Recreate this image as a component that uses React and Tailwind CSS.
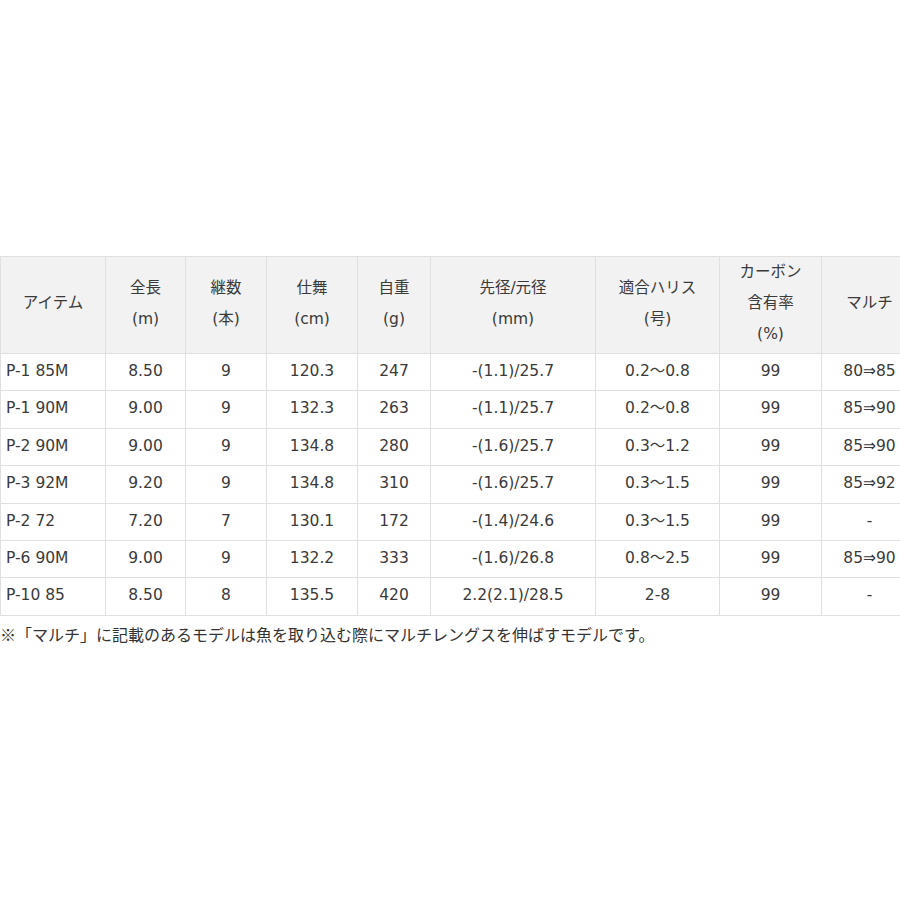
import React from "react";

const widths = [105, 80, 81, 91, 73, 165, 124, 102, 96];

const header = [
  ["アイテム"],
  ["全長", "(m)"],
  ["継数", "(本)"],
  ["仕舞", "(cm)"],
  ["自重", "(g)"],
  ["先径/元径", "(mm)"],
  ["適合ハリス", "(号)"],
  ["カーボン", "含有率", "(%)"],
  ["マルチ"],
];

const rows = [
  ["P-1 85M", "8.50", "9", "120.3", "247", "-(1.1)/25.7", "0.2～0.8", "99", "80⇒85"],
  ["P-1 90M", "9.00", "9", "132.3", "263", "-(1.1)/25.7", "0.2～0.8", "99", "85⇒90"],
  ["P-2 90M", "9.00", "9", "134.8", "280", "-(1.6)/25.7", "0.3～1.2", "99", "85⇒90"],
  ["P-3 92M", "9.20", "9", "134.8", "310", "-(1.6)/25.7", "0.3～1.5", "99", "85⇒92"],
  ["P-2 72", "7.20", "7", "130.1", "172", "-(1.4)/24.6", "0.3～1.5", "99", "-"],
  ["P-6 90M", "9.00", "9", "132.2", "333", "-(1.6)/26.8", "0.8～2.5", "99", "85⇒90"],
  ["P-10 85", "8.50", "8", "135.5", "420", "2.2(2.1)/28.5", "2-8", "99", "-"],
];

const App = () => {
  return (
    <div className="w-[900px] h-[900px] overflow-hidden bg-white text-[#3a3a3a]">
      <div className="pt-[256px]">
        <table
          className="table-fixed border-collapse w-[917px] text-[15.5px]"
          style={{ fontFamily: '"DejaVu Sans", "Noto Sans CJK JP", sans-serif' }}
        >
          <colgroup>
            {widths.map((w, i) => (
              <col key={i} style={{ width: w }} />
            ))}
          </colgroup>
          <thead>
            <tr className="h-[96px] bg-[#f2f2f2]">
              {header.map((lines, i) => (
                <th
                  key={i}
                  className="border border-[#e0e0e0] font-normal text-center leading-[31px] p-0 pb-[3px]"
                >
                  {lines.map((l) => (
                    <div key={l}>{l}</div>
                  ))}
                </th>
              ))}
            </tr>
          </thead>
          <tbody>
            {rows.map((r, ri) => (
              <tr key={ri} className="h-[37.4px]">
                {r.map((c, ci) => (
                  <td
                    key={ci}
                    className={
                      "border border-[#e0e0e0] p-0 pb-[1px] leading-none " +
                      (ci === 0 ? "text-left pl-[5px]" : "text-center")
                    }
                  >
                    {c}
                  </td>
                ))}
              </tr>
            ))}
          </tbody>
        </table>
        <p
          className="mt-[6px] text-[16px] leading-[24px] text-[#333]"
          style={{ fontFamily: '"Noto Sans CJK JP", sans-serif' }}
        >
          ※「マルチ」に記載のあるモデルは魚を取り込む際にマルチレングスを伸ばすモデルです。
        </p>
      </div>
    </div>
  );
};

export default App;
